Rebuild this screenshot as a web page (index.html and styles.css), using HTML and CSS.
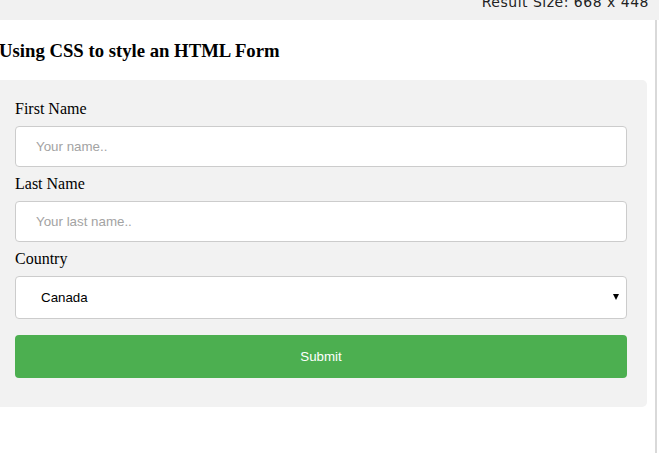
FILE: index.html
```html
<!DOCTYPE html>
<html>
<head>
<meta charset="utf-8">
<link rel="stylesheet" href="styles.css">
</head>
<body>
<div class="topbar"><span class="size">Result Size: 668 x 448</span></div>
<div class="frame">
  <div class="page">
    <h3 class="title">Using CSS to style an HTML Form</h3>
    <div class="formbox">
      <form>
        <label class="lbl" for="fname">First Name</label>
        <input class="field" type="text" id="fname" placeholder="Your name..">
        <label class="lbl" for="lname">Last Name</label>
        <input class="field" type="text" id="lname" placeholder="Your last name..">
        <label class="lbl" for="country">Country</label>
        <div class="selwrap">
          <select class="field sel" id="country">
            <option>Canada</option>
            <option>Australia</option>
            <option>USA</option>
          </select>
        </div>
        <button class="submit" type="button">Submit</button>
      </form>
    </div>
  </div>
  <div class="gutter"></div>
</div>
</body>
</html>
```
FILE: styles.css
```css
html, body {
  margin: 0;
  padding: 0;
  background: #ffffff;
}
body {
  width: 659px;
  height: 453px;
  overflow: hidden;
  font-family: "Liberation Serif", "Times New Roman", serif;
}
.topbar {
  height: 20px;
  background: #f1f1f1;
  overflow: hidden;
  display: flex;
  justify-content: flex-end;
  align-items: flex-end;
}
.size {
  font-family: "DejaVu Sans", Verdana, sans-serif;
  font-size: 14px;
  line-height: 16px;
  color: #222;
  margin-right: 10px;
  margin-bottom: 10px;
  letter-spacing: 0.5px;
  white-space: nowrap;
}
.frame {
  display: flex;
  height: 433px;
}
.page {
  width: 655px;
  overflow: hidden;
  background: #fff;
}
.gutter {
  width: 2px;
  background: #d9d9d9;
}
.title {
  margin: 20px 0 18px -1px;
  font-size: 18.72px;
  line-height: 22px;
  font-weight: bold;
  color: #000;
}
.formbox {
  margin-left: -5px;
  width: 652px;
  box-sizing: border-box;
  background: #f2f2f2;
  border-radius: 5px;
  padding: 20px;
}
.lbl {
  display: block;
  font-size: 16px;
  line-height: 18px;
  color: #000;
}
.field {
  display: block;
  width: 100%;
  box-sizing: border-box;
  margin: 8px 0;
  padding: 12px 20px;
  height: 41px;
  border: 1px solid #ccc;
  border-radius: 4px;
  background: #fff;
  font-family: "Liberation Sans", Arial, sans-serif;
  font-size: 13.33px;
  color: #000;
  outline: none;
}
.field::placeholder {
  color: #a3a3a3;
}
.selwrap {
  position: relative;
}
.sel {
  -webkit-appearance: none;
  appearance: none;
  height: 43px;
  padding: 0 30px 0 25px;
  margin-bottom: 16px;
}
.selwrap::after {
  content: "";
  position: absolute;
  right: 8px;
  top: 18px;
  border-left: 3.5px solid transparent;
  border-right: 3.5px solid transparent;
  border-top: 6px solid #000;
}
.submit {
  display: block;
  width: 100%;
  height: 43px;
  margin: 0 0 9px;
  border: none;
  border-radius: 4px;
  background: #4caf50;
  color: #fff;
  font-family: "Liberation Sans", Arial, sans-serif;
  font-size: 13.33px;
}
```
